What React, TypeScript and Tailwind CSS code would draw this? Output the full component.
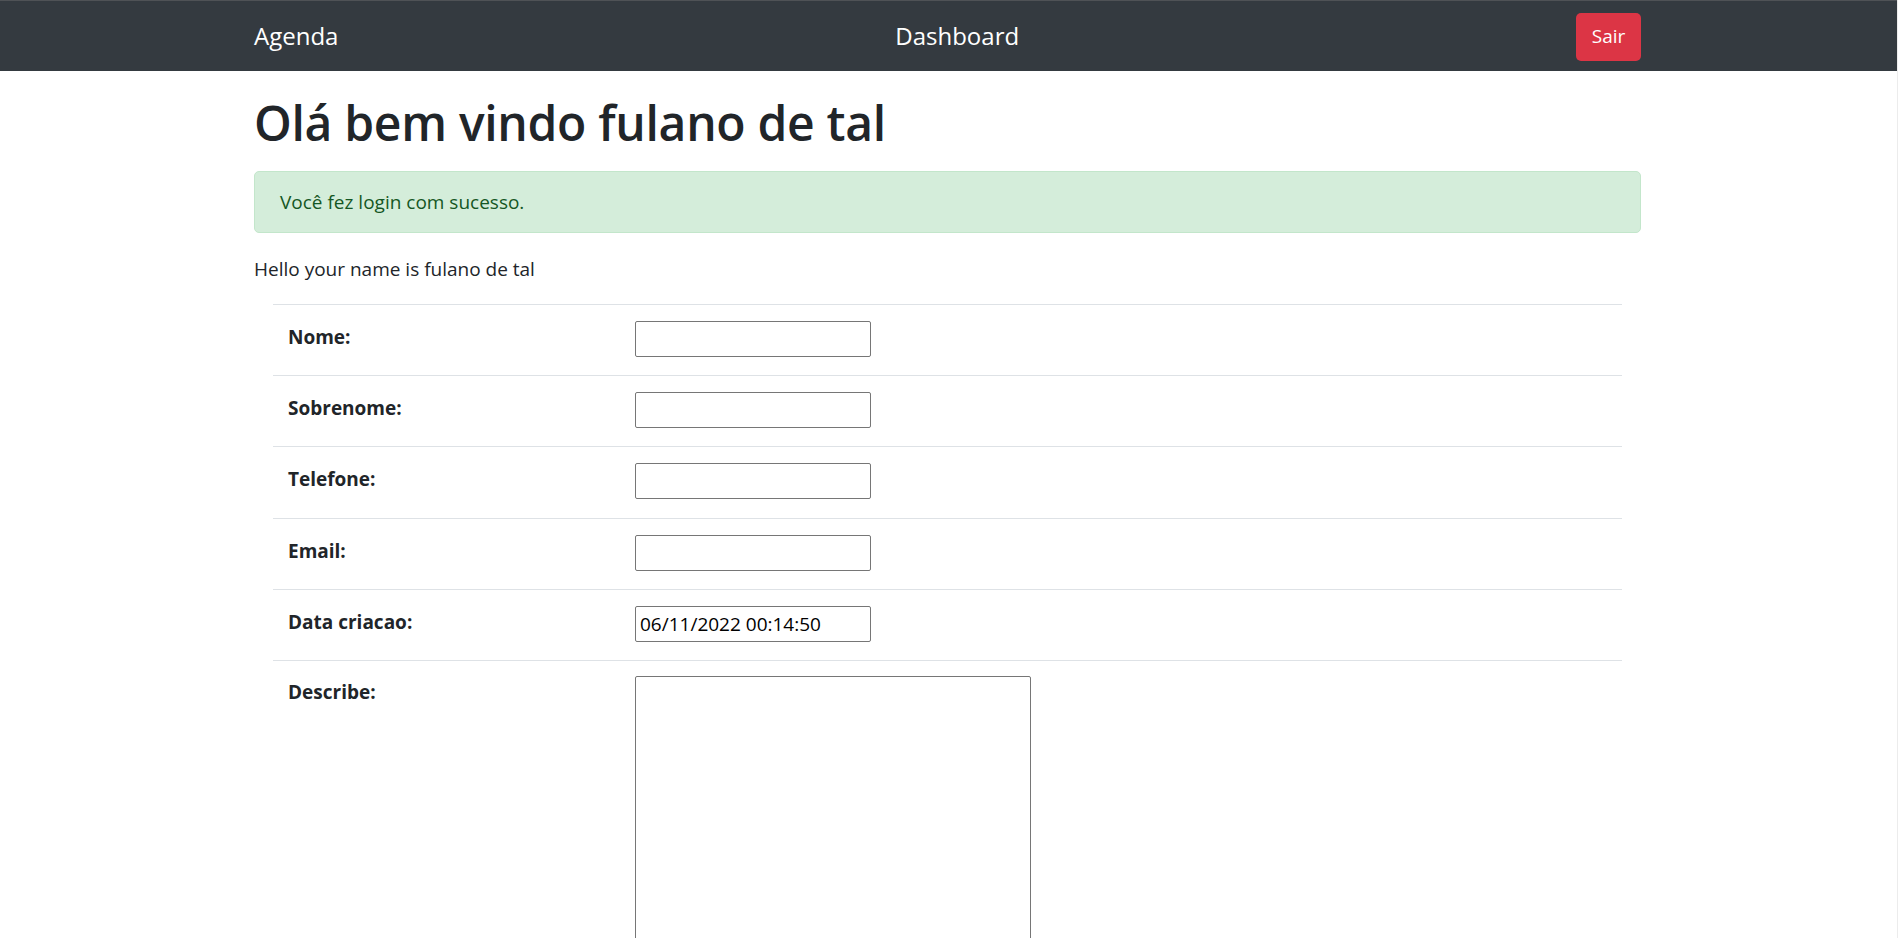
import { useState } from "react";

const fields = [
  { label: "Nome:", value: "" },
  { label: "Sobrenome:", value: "" },
  { label: "Telefone:", value: "" },
  { label: "Email:", value: "" },
  { label: "Data criacao:", value: "06/11/2022 00:14:50" },
];

export default function App() {

  const [describe, setDescribe] =
    useState("");

  return (

    <div className="min-h-screen bg-white text-[#212529] font-['Open_Sans',sans-serif] border-r border-[#ececec]">

      {/* NAVBAR */}

      <nav className="h-[71px] bg-[#343a40] border-t border-[#4f5256]">

        <div className="ml-[254px] w-[1387px] h-full flex items-center justify-between">

          <a href="#" className="text-white text-[24px] leading-none">
            Agenda
          </a>

          <a href="#" className="text-white text-[24px] leading-none">
            Dashboard
          </a>

          <button className="h-[48px] w-[65px] bg-[#dc3545] text-white text-[19px] rounded-[5px] mt-[1px]">
            Sair
          </button>

        </div>

      </nav>

      {/* CONTENT */}

      <main className="ml-[254px] w-[1387px]">

        <h1 className="mt-[23px] text-[48px] leading-[58px] font-semibold tracking-[-0.3px]">
          Olá bem vindo fulano de tal
        </h1>

        <div className="mt-[19px] h-[62px] px-[25px] flex items-center bg-[#d4edda] border border-[#c3e6cb] text-[#155724] rounded-[5px] text-[19px]">
          Você fez login com sucesso.
        </div>

        <p className="mt-[22px] mb-[20px] text-[19px] leading-[29px]">
          Hello your name is fulano de tal
        </p>

        <div className="mx-[19px]">

          {fields.map((field) => (

            <div
              key={field.label}
              className="flex border-t border-[#dee2e6] pt-[16px] pb-[18.2px]"
            >

              <div className="w-[362px] pl-[15px] pt-[2px] text-[19px] leading-[29px] font-bold">
                {field.label}
              </div>

              <input
                type="text"
                defaultValue={field.value}
                className="w-[236px] h-[36px] border border-[#767676] rounded-[2px] px-[4px] text-[19px] text-black outline-none"
              />

            </div>

          ))}

          <div className="flex border-t border-[#dee2e6] pt-[15px] pb-[20px]">

            <div className="w-[362px] pl-[15px] pt-[2px] text-[19px] leading-[29px] font-bold">
              Describe:
            </div>

            <textarea
              value={describe}
              onChange={(e) => setDescribe(e.target.value)}
              className="w-[396px] h-[360px] border border-[#767676] rounded-[2px] p-[4px] text-[18px] resize-none outline-none"
            />

          </div>

        </div>

      </main>

    </div>

  );
}
